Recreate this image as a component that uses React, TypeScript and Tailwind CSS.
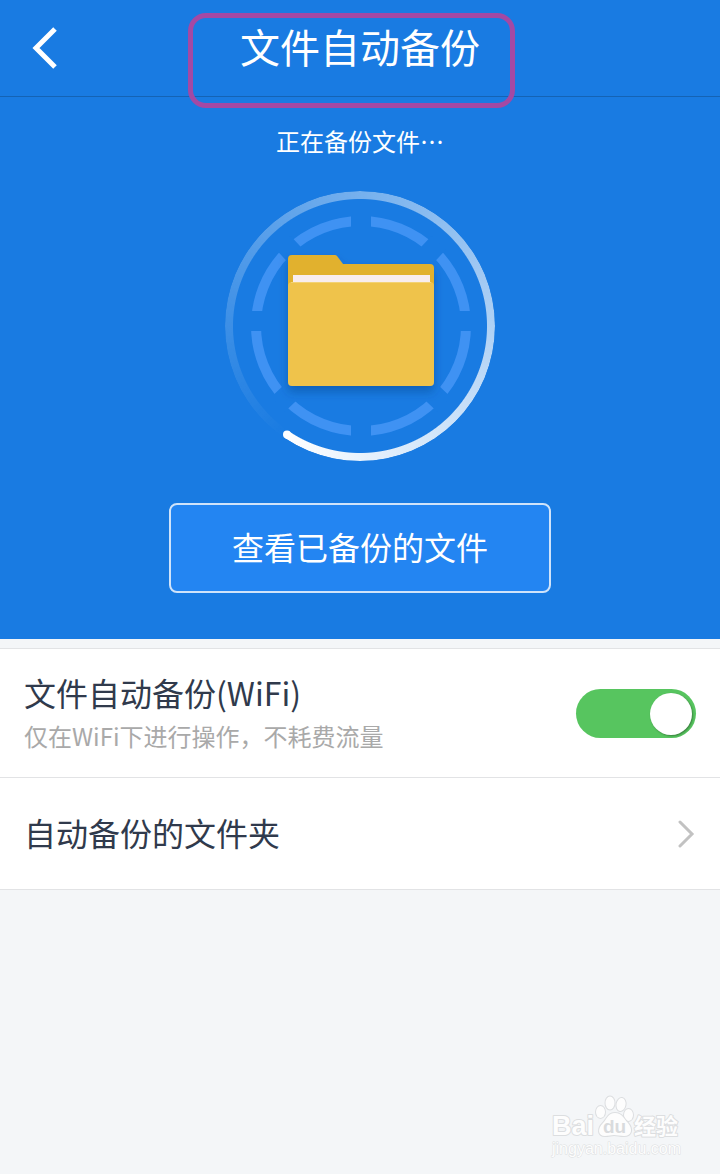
import { useState } from "react";

const fontStack = "font-['Noto_Sans_CJK_SC','Noto_Sans',sans-serif]";

function BackIcon() {
  return (
    <svg width="26" height="42" viewBox="0 0 26 42" fill="none" aria-hidden="true">
      <path d="M23 2 4 21 23 40" stroke="#fff" strokeWidth="5" />
    </svg>
  );
}

function ChevronIcon() {
  return (
    <svg width="18" height="28" viewBox="0 0 18 28" fill="none" aria-hidden="true">
      <path d="M2 2 14 14 2 26" stroke="#c2c2c2" strokeWidth="3" strokeLinecap="round" />
    </svg>
  );
}

function FolderProgress() {
  return (
    <div className="relative size-[270px]">
      <div className="absolute inset-0 rounded-full bg-[conic-gradient(from_214deg,#ffffff00,#ffffff)] [mask-image:radial-gradient(circle,transparent_126.5px,#000_127.5px)]" />
      <svg className="absolute inset-0" width="270" height="270" viewBox="0 0 270 270" aria-hidden="true">
        <defs>
          <filter id="folder-shadow" x="-20%" y="-20%" width="140%" height="150%">
            <feDropShadow dx="0" dy="6" stdDeviation="5" floodColor="#0b3d80" floodOpacity="0.4" />
          </filter>
        </defs>
        <circle cx="136" cy="135" r="105" fill="none" stroke="#3f92f3" strokeWidth="10" />
        <g stroke="#197be2" strokeWidth="20">
          <path d="M136 21V249M22 130H250" />
          <path d="M136 135 213.700 51.700M136 135 58.300 51.700" />
          <path d="M136 135 218.900 213.300M136 135 53.100 213.300" />
        </g>
        <circle cx="62" cy="243.500" r="4" fill="#fff" />
        <g filter="url(#folder-shadow)">
          <path d="M63 68q0-4 4-4h43q1 0 2 1l6 8h87q4 0 4 4v28H63z" fill="#e1b12d" />
          <path d="M68 84h137v12H68z" fill="#f8edee" />
          <rect x="63" y="91" width="146" height="104" rx="4" fill="#efc34c" />
        </g>
        <path d="M66 91.500h140" stroke="#f3d274" />
      </svg>
    </div>
  );
}

function Watermark() {
  return (
    <svg
      className="absolute right-10 bottom-3 overflow-visible"
      width="130"
      height="68"
      viewBox="0 0 130 68"
      role="img"
      aria-label="Baidu 经验"
    >
      <g fill="#fdfdfd" stroke="#dcdee0" strokeWidth="2" paintOrder="stroke" strokeLinejoin="round">
        <ellipse cx="50.500" cy="18" rx="4.500" ry="6" />
        <ellipse cx="60" cy="9" rx="4.500" ry="6.500" />
        <ellipse cx="71" cy="10.500" rx="4.500" ry="6.500" transform="rotate(10 71 10.500)" />
        <ellipse cx="78.500" cy="21" rx="4.500" ry="6" />
        <path d="M65 19c-7 0-8 6-12 10-6 6-5 13 2 13 4 0 6-1 9-1s6 1 10 1c8 0 9-7 4-13-4-4-6-10-13-10z" />
        <text x="2" y="41" fontSize="27" fontWeight="700" fontFamily="Liberation Sans, sans-serif">Bai</text>
        <text x="84" y="40" fontSize="22" fontWeight="700" fontFamily="Noto Sans CJK SC, sans-serif">经验</text>
        <text x="2" y="60" fontSize="16" strokeWidth="1" fontFamily="Liberation Sans, sans-serif">jingyan.baidu.com</text>
      </g>
      <text x="53" y="39" fontSize="19" fontWeight="700" fill="#d9dbdd" fontFamily="Liberation Sans, sans-serif">du</text>
    </svg>
  );
}

export default function App() {
  const [enabled, setEnabled] = useState(true);

  return (
    <div lang="zh-CN" className={`relative min-h-screen bg-[#f4f6f8] text-[#303a4c] ${fontStack}`}>
      <section className="bg-[#197be2] text-white">
        <header className="relative grid h-[97px] grid-cols-[96px_1fr_96px] items-center border-b border-[#1463b5]">
          <button type="button" aria-label="返回" className="flex h-full items-center pl-8">
            <BackIcon />
          </button>
          <h1 className="pb-1 text-center text-[40px] leading-[60px]">文件自动备份</h1>
          <div className="absolute top-[13px] left-1/2 ml-[-172px] h-[95px] w-[327px] rounded-[18px] border-[5px] border-[#a349a4]" />
        </header>
        <div className="flex flex-col items-center pt-[26px] pb-[46px]">
          <p className="text-2xl leading-9">正在备份文件…</p>
          <div className="mt-8">
            <FolderProgress />
          </div>
          <button
            type="button"
            className="mt-[42px] h-[90px] w-[382px] max-w-full rounded-lg border-2 border-[#cfe3fa] bg-[#2385f2] pb-1 text-[32px]"
          >
            查看已备份的文件
          </button>
        </div>
      </section>

      <section className="mt-[9px] border-y border-[#e2e3e5] bg-white">
        <label className="flex items-center justify-between px-6 py-[19px]">
          <span className="flex flex-col gap-0.5 pb-1">
            <span className="text-[32px] leading-[48px]">文件自动备份(WiFi)</span>
            <span className="text-2xl leading-9 text-[#a9a9a9]">仅在WiFi下进行操作，不耗费流量</span>
          </span>
          <span className="relative h-[49px] w-[120px] shrink-0">
            <input
              type="checkbox"
              role="switch"
              checked={enabled}
              onChange={(e) => setEnabled(e.target.checked)}
              className="peer block h-full w-full appearance-none rounded-full bg-gray-300 checked:bg-[#57c55f]"
            />
            <span className="pointer-events-none absolute top-1 left-1 size-[42px] rounded-full bg-white shadow-[1px_1px_2px_#00000059] peer-checked:left-[74px]" />
          </span>
        </label>
        <a href="#folders" className="flex h-28 items-center justify-between border-t border-[#e2e3e5] px-6">
          <span className="pb-1 text-[32px] leading-[48px]">自动备份的文件夹</span>
          <ChevronIcon />
        </a>
      </section>

      <Watermark />
    </div>
  );
}
